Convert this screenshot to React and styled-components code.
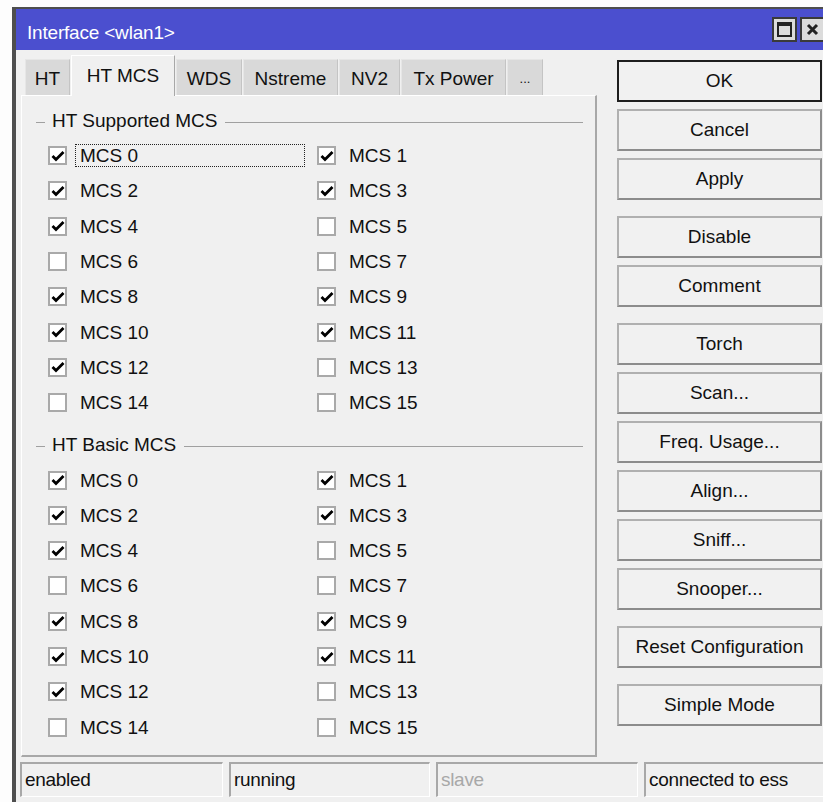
import React from 'react'
import styled, { createGlobalStyle } from 'styled-components'

const GlobalStyle = createGlobalStyle`
  html, body {
    margin: 0;
    padding: 0;
    background: #fdfdfd;
  }
  body {
    font-family: "Liberation Sans", Arial, sans-serif;
    overflow: hidden;
  }
`

const Desktop = styled.div`
  width: 823px;
  height: 802px;
  overflow: hidden;
  box-sizing: border-box;
  padding: 7px 0 0 12px;
`

const Window = styled.div`
  width: 817px;
  height: 830px;
  box-sizing: border-box;
  border: 2px solid #4e4e4e;
  border-left-width: 4px;
  background: #f0f0f0;
  display: flex;
  flex-direction: column;
`

const TitleBar = styled.div`
  height: 41px;
  flex: none;
  background: #4b4fcf;
  color: #fff;
  font-size: 19px;
  display: flex;
  align-items: center;
  justify-content: space-between;
  padding: 0 2px 0 11px;
`

const TitleText = styled.span`
  padding-top: 7px;
  letter-spacing: -0.2px;
`

const TitleButtons = styled.div`
  display: flex;
  gap: 3px;
`

const TitleButton = styled.div`
  width: 25px;
  height: 25px;
  box-sizing: border-box;
  border: 2px solid #3a3a3a;
  background: #dcdcdc;
  display: flex;
  align-items: center;
  justify-content: center;
`

const Body = styled.div`
  display: grid;
  grid-template-columns: 576px 205px;
  column-gap: 20px;
  padding: 5px 5px 0 5px;
`

const LeftColumn = styled.div`
  display: flex;
  flex-direction: column;
`

const TabStrip = styled.div`
  height: 40px;
  display: flex;
  align-items: flex-end;
  gap: 1px;
  padding-left: 4px;
  position: relative;
  z-index: 1;
`

const Tab = styled.div`
  box-sizing: border-box;
  width: ${p => p.width}px;
  height: ${p => (p.active ? '41px' : '36px')};
  margin-bottom: ${p => (p.active ? '-1px' : '0')};
  padding-top: ${p => (p.active ? '0' : '2px')};
  display: flex;
  align-items: center;
  justify-content: center;
  font-size: ${p => (p.more ? '13px' : '19px')};
  color: #111;
  background: ${p => (p.active ? '#f0f0f0' : '#d9d9d9')};
  border: 1px solid ${p => (p.active ? '#ffffff' : '#e6e6e6')};
  border-right-color: ${p => (p.active ? '#a8a8a8' : '#c4c4c4')};
  border-bottom: none;
`

const Panel = styled.div`
  height: 662px;
  box-sizing: border-box;
  border-top: 1px solid #ffffff;
  border-left: 1px solid #ffffff;
  border-right: 2px solid #a8a8a8;
  border-bottom: 2px solid #a8a8a8;
  padding: 13px 12px 0 14px;
`

const GroupHeader = styled.div`
  height: 24px;
  display: flex;
  align-items: center;
  font-size: 19px;
  color: #111;
  margin-top: ${p => p.offset || 0}px;
  margin-bottom: 4px;

  &::before {
    content: '';
    width: 9px;
    height: 1px;
    background: #a0a0a0;
    margin-right: 7px;
    margin-top: 2px;
  }
  &::after {
    content: '';
    flex: 1;
    height: 1px;
    background: #a0a0a0;
    margin-left: 8px;
    margin-top: 2px;
  }
`

const CheckGrid = styled.div`
  display: grid;
  grid-template-columns: 269px 269px;
  grid-auto-rows: 35.3px;
  padding-left: 12px;
`

const CheckRow = styled.label`
  display: flex;
  align-items: center;
  font-size: 19px;
  color: #111;
  padding-top: 2px;
`

const Box = styled.span`
  width: 19px;
  height: 19px;
  flex: none;
  box-sizing: border-box;
  border: 2px solid #a9a9a9;
  background: #fff;
  display: flex;
  align-items: center;
  justify-content: center;
`

const Caption = styled.span`
  margin-left: 9px;
  padding: 0 4px;
  line-height: 21px;
  ${p =>
    p.focused &&
    `
    flex: 1;
    margin-right: 13px;
    outline: 1px dotted #222;
  `}
`

const ButtonColumn = styled.div`
  display: flex;
  flex-direction: column;
  gap: 16px;
  margin-top: 5px;
`

const ButtonGroup = styled.div`
  display: flex;
  flex-direction: column;
  gap: 7px;
`

const Button = styled.div`
  height: 42px;
  box-sizing: border-box;
  border: 2px solid;
  border-color: ${p => (p.primary ? '#1e1e1e' : '#b0b0b0 #8c8c8c #8c8c8c #b0b0b0')};
  background: #f1f1f1;
  display: flex;
  align-items: center;
  justify-content: center;
  font-size: 19px;
  color: #111;
`

const StatusBar = styled.div`
  display: flex;
  gap: 6px;
  padding-left: 4px;
  margin-top: 5px;
`

const StatusField = styled.div`
  width: ${p => p.width || 203}px;
  height: 35px;
  box-sizing: border-box;
  border-top: 2px solid #a8a8a8;
  border-left: 2px solid #a8a8a8;
  border-bottom: 1px solid #fff;
  border-right: 1px solid #fff;
  display: flex;
  align-items: center;
  padding-left: 3px;
  font-size: 19px;
  letter-spacing: -0.3px;
  color: ${p => (p.disabled ? '#a8a8a8' : '#111')};
`

const CheckMark = () => (
  <svg width="14" height="12" viewBox="0 0 14 12">
    <path d="M1.5 6 L5 9.5 L12.5 2" fill="none" stroke="#000" strokeWidth="2.8" />
  </svg>
)

const MaximizeIcon = () => (
  <svg width="15" height="15" viewBox="0 0 15 15">
    <rect x="1" y="1" width="13" height="13" fill="none" stroke="#222" strokeWidth="2" />
    <rect x="1" y="1" width="13" height="3" fill="#222" />
  </svg>
)

const CloseIcon = () => (
  <svg width="15" height="15" viewBox="0 0 15 15">
    <path d="M3 3 L12 12 M12 3 L3 12" stroke="#222" strokeWidth="3" />
  </svg>
)

const tabs = [
  { label: 'HT', width: 45 },
  { label: 'HT MCS', width: 104, active: true },
  { label: 'WDS', width: 66 },
  { label: 'Nstreme', width: 95 },
  { label: 'NV2', width: 61 },
  { label: 'Tx Power', width: 105 },
  { label: '...', width: 36, more: true },
]

// enabled rates, index = MCS number
const rates = [1, 1, 1, 1, 1, 0, 0, 0, 1, 1, 1, 1, 1, 0, 0, 0]

const buttonGroups = [
  ['OK', 'Cancel', 'Apply'],
  ['Disable', 'Comment'],
  ['Torch', 'Scan...', 'Freq. Usage...', 'Align...', 'Sniff...', 'Snooper...'],
  ['Reset Configuration'],
  ['Simple Mode'],
]

const McsGroup = ({ title, offset, focusFirst }) => (
  <>
    <GroupHeader offset={offset}>{title}</GroupHeader>
    <CheckGrid>
      {rates.map((on, i) => (
        <CheckRow key={i}>
          <Box>{on ? <CheckMark /> : null}</Box>
          <Caption focused={focusFirst && i === 0}>MCS {i}</Caption>
        </CheckRow>
      ))}
    </CheckGrid>
  </>
)

export default function App() {
  return (
    <Desktop>
      <GlobalStyle />
      <Window>
        <TitleBar>
          <TitleText>Interface &lt;wlan1&gt;</TitleText>
          <TitleButtons>
            <TitleButton><MaximizeIcon /></TitleButton>
            <TitleButton><CloseIcon /></TitleButton>
          </TitleButtons>
        </TitleBar>
        <Body>
          <LeftColumn>
            <TabStrip>
              {tabs.map(t => (
                <Tab key={t.label} width={t.width} active={t.active} more={t.more}>
                  {t.label}
                </Tab>
              ))}
            </TabStrip>
            <Panel>
              <McsGroup title="HT Supported MCS" focusFirst />
              <McsGroup title="HT Basic MCS" offset={14} />
            </Panel>
          </LeftColumn>
          <ButtonColumn>
            {buttonGroups.map((group, g) => (
              <ButtonGroup key={g}>
                {group.map(label => (
                  <Button key={label} primary={label === 'OK'}>{label}</Button>
                ))}
              </ButtonGroup>
            ))}
          </ButtonColumn>
        </Body>
        <StatusBar>
          <StatusField>enabled</StatusField>
          <StatusField width={201}>running</StatusField>
          <StatusField width={202} disabled>slave</StatusField>
          <StatusField width={180}>connected to ess</StatusField>
        </StatusBar>
      </Window>
    </Desktop>
  )
}
